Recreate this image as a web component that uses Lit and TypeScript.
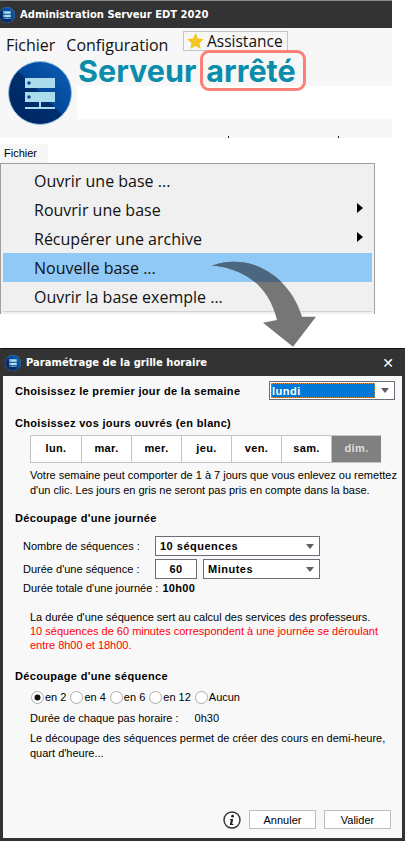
import { LitElement, html, css, svg } from "lit";
import { customElement } from "lit/decorators.js";

const serverIcon = (size: number) => html`<svg width=${size} height=${size} viewBox="0 0 64 64">
  <defs><linearGradient id="g${size}" x1="0" y1="1" x2="1" y2="0"><stop offset="0" stop-color="#00235f"/><stop offset="0.5" stop-color="#00306f"/><stop offset="0.5" stop-color="#03479a"/><stop offset="1" stop-color="#0b5fb5"/></linearGradient></defs>
  <circle cx="32" cy="32" r="31.5" fill="url(#g${size})" stroke="#8fc2dc" stroke-width="1"/>
  <rect x="17" y="17" width="30" height="10" fill="#abdcec"/>
  <rect x="17" y="31" width="30" height="10" fill="#abdcec"/>
  <circle cx="21" cy="22" r="1.7" fill="#0b3f86"/><circle cx="21" cy="36" r="1.7" fill="#0b3f86"/>
  <rect x="31" y="41" width="2" height="6" fill="#abdcec"/>
  <rect x="17" y="46" width="30" height="2" fill="#abdcec"/>
</svg>`;

const caret = svg`<svg class="caret" width="8" height="5" viewBox="0 0 8 5"><path d="M0 0H8L4 5Z" fill="#5f5f68"/></svg>`;
const arrowPath = "M212 265.7C224 261 240 260 254 265C280 274 296 296 302 316.7L316 316.7L293 346.7L263 322.7L277 320C272 300 262 286 248 277C236 270 224 266 212 265.7Z";

@customElement("app-root")
export class AppRoot extends LitElement {
  static styles = css`
    :host { display: block; position: relative; width: 405px; height: 841px; background: #fff; overflow: hidden; font-family: "Liberation Sans", Arial, sans-serif; color: #000; }
    .win { width: 392px; height: 138px; background: #f7f7f7; display: flex; flex-direction: column; position: relative; }
    .tick { position: absolute; top: 136px; width: 1px; height: 2px; background: #222; }
    .tb { height: 28px; flex: none; background: #333; border-top: 1px solid #888; box-sizing: border-box; display: flex; align-items: center; gap: 5px; color: #fff; font: bold 10px "DejaVu Sans", sans-serif; }
    .tb svg { margin-left: -1px; }
    .menubar { display: flex; font: 16px "Open Sans", sans-serif; height: 20px; position: relative; padding-left: 6px; gap: 11px; line-height: 20px; margin-top: 7px; color: #111; flex: none; }
    .assist { position: absolute; left: 183px; top: -4px; height: 20px; width: 105px; box-sizing: border-box; border: 1px solid #c6c6c6; display: flex; align-items: center; gap: 3px; padding-left: 3px; font-size: 15.5px; }
    .head { display: flex; }
    .logo { margin: 6px 0 0 8px; flex: none; height: 64px; }
    .hr { margin-left: 5px; flex: 1; }
    .status { font: bold 30.5px "Inter", "Liberation Sans", sans-serif; color: #0a8cab; display: flex; height: 36px; margin-top: -5px; align-items: baseline; padding-left: 1px; position: relative; }
    .stop { border: 3px solid #fd8078; border-radius: 9px; padding: 0 7px 0 3px; margin-left: 4px; line-height: 35px; box-sizing: border-box; height: 41px; }
    .white { background: #fff; height: 33px; }

    .tab { margin-top: 6px; width: 48px; height: 19px; background: #f7f7f7; font-size: 11px; line-height: 19px; padding-left: 4px; box-sizing: border-box; }
    .menu { width: 375px; height: 151px; box-sizing: border-box; border: 1px solid #a0a0a0; border-bottom: none; background: #f0f0f0; padding: 2px; font: 16px "Open Sans", sans-serif; color: #111; }
    .mi { height: 29px; box-sizing: border-box; padding: 1px 0 0 31px; display: flex; justify-content: space-between; align-items: center; }
    .mi.on { background: #90c8f6; }
    .tri { width: 0; height: 0; border-left: 6px solid #000; border-top: 5px solid transparent; border-bottom: 5px solid transparent; margin-right: 9px; margin-top: -4px; }
    .msep { height: 1px; background: #d4d4d4; }

    .dlg { position: absolute; left: 0; top: 348px; width: 405px; height: 493px; box-sizing: border-box; border: 3px solid #333; border-top: 1px solid #111; background: #f8f8f8; font-size: 11px; display: flex; flex-direction: column; }
    .dtb { height: 27px; flex: none; background: #333; color: #fff; margin: 0 -3px; padding: 0 11px 0 5px; display: flex; align-items: center; gap: 5px; font: bold 10px "DejaVu Sans", sans-serif; }
    .dtb span { flex: 1; }
    .dtb .x { flex: none; font: bold 14px "DejaVu Sans", sans-serif; }
    .body { padding: 0 7px 0 12px; flex: 1; display: flex; flex-direction: column; position: relative; }
    .h { font: bold 11px "Liberation Sans", sans-serif; letter-spacing: 0.33px; line-height: 14px; }
    .r1 { display: flex; justify-content: space-between; align-items: center; height: 19px; margin-top: 5px; }
    .sel { box-sizing: border-box; border: 1px solid #6d6d78; background: #fff; display: flex; align-items: center; justify-content: space-between; padding: 0 5px 0 4px; height: 20px; font-weight: bold; font-size: 11px; letter-spacing: 0.5px; }
    .s0 { width: 126px; height: 19px; padding: 1px 5px 1px 1px; }
    .s0 b { flex: 1; height: 100%; background: #0078d7; color: #fff; outline: 1px dotted #e0903a; outline-offset: -1px; margin-right: 6px; line-height: 16px; font-weight: bold; padding-left: 1px; }
    .days { display: grid; grid-template-columns: repeat(7, 50px); width: 351px; height: 28px; box-sizing: border-box; margin: 5px 0 0 15px; border: 1px solid #c4c4c4; background: #fff; font-weight: bold; letter-spacing: 0.4px; }
    .days div { display: flex; align-items: center; justify-content: center; border-left: 1px solid #c4c4c4; padding-bottom: 2px; }
    .days div:first-child { border-left: none; }
    .days .off { background: #808080; color: #dedede; }
    .p { margin-left: 15px; line-height: 15px; white-space: nowrap; }
    .f { display: grid; grid-template-columns: 132px 42px 6px 117px; row-gap: 3px; margin: 11px 0 0 8px; align-items: center; }
    .f .wide { grid-column: 2 / 5; }
    .f .num { grid-column: 2; justify-content: center; padding: 0; }
    .f .min { grid-column: 4; }
    .total { margin: 2px 0 0 8px; display: flex; line-height: 14px; }
    .total b { margin-left: 4px; letter-spacing: 0.3px; }
    .red { color: #f00; }
    .radios { display: flex; margin: 7px 0 0 16px; align-items: center; height: 14px; }
    .radios label { display: flex; align-items: center; gap: 1px; margin-right: 4px; }
    .radio { width: 13px; height: 13px; }
    .pas { display: flex; margin-top: 7px; }
    .pas span:last-child { margin-left: 16px; }
    .foot { position: absolute; right: 11px; top: 434px; display: flex; gap: 8px; align-items: center; }
    .btn { box-sizing: border-box; width: 67px; height: 19px; border: 1px solid #bdbdbd; background: #fff; display: flex; align-items: center; justify-content: center; font-size: 11px; }
    .arrow { position: absolute; left: 0; top: 0; pointer-events: none; }
  `;

  private radio(on: boolean) {
    return html`<svg class="radio" viewBox="0 0 13 13"><circle cx="6.5" cy="6.5" r="6" fill="#fff" stroke="#aaa"/>${on ? svg`<circle cx="6.5" cy="6.5" r="3" fill="#111"/>` : ""}</svg>`;
  }

  render() {
    return html`
      <div class="win">
        <div class="tb">${serverIcon(16)}Administration Serveur EDT 2020</div>
        <div class="menubar"><span>Fichier</span><span>Configuration</span>
          <div class="assist"><svg width="17" height="16" viewBox="0 0 24 23"><path d="M12 0l3.6 7.8 8.4 1-6.2 5.8 1.7 8.4-7.5-4.2L4.5 23l1.7-8.4L0 8.8l8.4-1z" fill="#f2c81e"/></svg>Assistance</div>
        </div>
        <div class="head">
          <div class="logo">${serverIcon(64)}</div>
          <div class="hr">
            <div class="status"><span>Serveur</span><span class="stop">arrêté</span></div>
            <div class="white"></div>
          </div>
        </div>
        <i class="tick" style="left:228px"></i><i class="tick" style="left:338px"></i>
      </div>
      <div class="tab">Fichier</div>
      <div class="menu">
        <div class="mi">Ouvrir une base ...</div>
        <div class="mi">Rouvrir une base<i class="tri"></i></div>
        <div class="mi">Récupérer une archive<i class="tri"></i></div>
        <div class="mi on">Nouvelle base ...</div>
        <div class="mi">Ouvrir la base exemple ...</div>
        <div class="msep"></div>
      </div>
      <div class="dlg">
        <div class="dtb">${serverIcon(16)}<span>Paramétrage de la grille horaire</span><span class="x">✕</span></div>
        <div class="body">
          <div class="r1"><span class="h">Choisissez le premier jour de la semaine</span><div class="sel s0"><b>lundi</b>${caret}</div></div>
          <div class="h" style="margin-top:16px">Choisissez vos jours ouvrés (en blanc)</div>
          <div class="days"><div>lun.</div><div>mar.</div><div>mer.</div><div>jeu.</div><div>ven.</div><div>sam.</div><div class="off">dim.</div></div>
          <div class="p" style="margin-top:5px">Votre semaine peut comporter de 1 à 7 jours que vous enlevez ou remettez<br>d'un clic. Les jours en gris ne seront pas pris en compte dans la base.</div>
          <div class="h" style="margin-top:13px">Découpage d'une journée</div>
          <div class="f">
            <span>Nombre de séquences :</span><div class="sel wide">10 séquences${caret}</div>
            <span>Durée d'une séquence :</span><div class="sel num">60</div><div class="sel min">Minutes${caret}</div>
          </div>
          <div class="total"><span>Durée totale d'une journée :</span><b>10h00</b></div>
          <div class="p" style="margin-top:15px;line-height:14px">La durée d'une séquence sert au calcul des services des professeurs.<br><span class="red">10 séquences de 60 minutes correspondent à une journée se déroulant<br>entre 8h00 et 18h00.</span></div>
          <div class="h" style="margin-top:17px">Découpage d'une séquence</div>
          <div class="radios">
            <label>${this.radio(true)}en 2</label><label>${this.radio(false)}en 4</label><label>${this.radio(false)}en 6</label><label>${this.radio(false)}en 12</label><label>${this.radio(false)}Aucun</label>
          </div>
          <div class="p pas"><span>Durée de chaque pas horaire :</span><span>0h30</span></div>
          <div class="p" style="margin-top:5px">Le découpage des séquences permet de créer des cours en demi-heure,<br>quart d'heure...</div>
          <div class="foot">
            <svg width="18" height="18" viewBox="0 0 18 18"><circle cx="9" cy="9" r="8" fill="#fff" stroke="#333" stroke-width="1.4"/><circle cx="9.6" cy="5.2" r="1.4" fill="#222"/><path d="M7.2 8h3l-1 5h1.2v1H6.8l1-5H7z" fill="#222"/></svg>
            <div class="btn">Annuler</div><div class="btn">Valider</div>
          </div>
        </div>
      </div>
      <svg class="arrow" width="405" height="841" viewBox="0 0 405 841">
        <defs><clipPath id="band"><rect x="0" y="253" width="405" height="29"/></clipPath></defs>
        <path d=${arrowPath} fill="#767676"/>
        <path d=${arrowPath} fill="#4b667e" clip-path="url(#band)"/>
      </svg>
    `;
  }
}
